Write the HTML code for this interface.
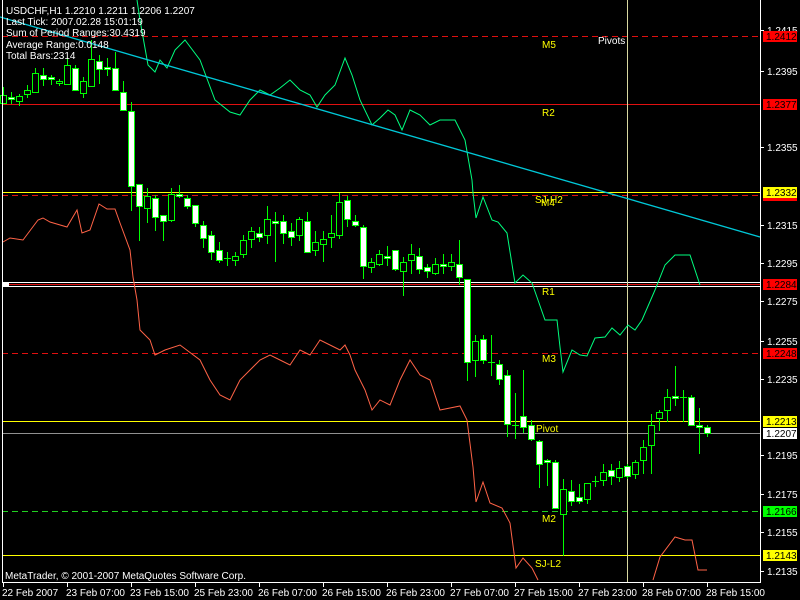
<!DOCTYPE html>
<html><head><meta charset="utf-8"><style>
html,body{margin:0;padding:0;background:#000;width:800px;height:600px;overflow:hidden}
svg{display:block}
text{font-family:"Liberation Sans",sans-serif;font-size:10px}
</style></head><body>
<svg id="s" width="800" height="600" xmlns="http://www.w3.org/2000/svg" shape-rendering="crispEdges">
<rect width="800" height="600" fill="#000"/>
<!-- horizontal levels -->
<line x1="2" y1="36.5" x2="760" y2="36.5" stroke="#e01010" stroke-dasharray="6,4"/>
<line x1="2" y1="104.5" x2="760" y2="104.5" stroke="#e01010"/>
<line x1="2" y1="192.5" x2="760" y2="192.5" stroke="#ffff00"/>
<line x1="2" y1="195.5" x2="760" y2="195.5" stroke="#e01010" stroke-dasharray="6,4"/>
<line x1="2" y1="282.5" x2="760" y2="282.5" stroke="#fff"/>
<line x1="2" y1="284.5" x2="760" y2="284.5" stroke="#e01010"/>
<line x1="2" y1="286.5" x2="760" y2="286.5" stroke="#fff"/>
<rect x="2" y="282" width="7" height="5" fill="#fff"/>
<line x1="2" y1="353.5" x2="760" y2="353.5" stroke="#e01010" stroke-dasharray="6,4"/>
<line x1="2" y1="421.5" x2="760" y2="421.5" stroke="#ffff00"/>
<line x1="2" y1="433.5" x2="760" y2="433.5" stroke="#909090"/>
<line x1="2" y1="511.5" x2="760" y2="511.5" stroke="#20d020" stroke-dasharray="6,4"/>
<line x1="2" y1="555.5" x2="760" y2="555.5" stroke="#ffff00"/>
<line x1="627.5" y1="0" x2="627.5" y2="582" stroke="#d8d8a0"/>
<g id="c"></g>
<polyline shape-rendering="auto" fill="none" stroke="#00ff7f" stroke-width="1" points="137,0 140,20 148,65 155,72 160,60 167,68 175,50 185,40 200,60 215,100 230,112 240,115 250,100 260,90 270,95 280,88 290,80 300,90 310,95 317,107 325,95 335,85 345,58 352,75 360,100 372,125 380,118 388,110 395,115 402,130 410,110 420,115 430,125 440,120 455,120 465,140 472,180 473,193 476,218 483,197 492,220 498,222 507,233 515,283 523,275 532,283 545,320 557,320 560,347 563,372 572,350 580,355 587,356 595,338 605,337 612,328 620,335 628,325 635,330 642,320 655,290 665,265 675,255 690,255 695,270 700,285"/>
<polyline shape-rendering="auto" fill="none" stroke="#ff6347" stroke-width="1" points="3,242 10,238 23,240 38,220 43,218 50,222 67,227 77,210 82,233 90,230 99,204 107,209 115,209 120,223 130,250 133,277 137,300 140,330 150,340 155,355 165,350 180,345 200,360 210,380 220,395 230,400 240,380 250,370 260,360 270,355 280,360 290,365 300,350 310,355 320,340 330,345 340,350 345,345 350,355 355,370 365,390 372,410 380,400 390,405 400,380 410,360 420,375 430,380 440,410 460,406 467,420 473,467 476,502 483,482 490,503 502,508 510,523 516,568 523,558 532,568 538,580"/>
<polyline shape-rendering="auto" fill="none" stroke="#ff6347" stroke-width="1" points="653,580 660,557 675,537 685,540 692,540 698,570 707,570"/>
<line shape-rendering="auto" x1="0" y1="17" x2="760" y2="237" stroke="#00c8d8" stroke-width="1.3"/>
<!-- level labels -->
<g fill="#ffff00">
<text x="542" y="48">M5</text>
<text x="542" y="116">R2</text>
<text x="535" y="203">SJ-H2</text>
<text x="541" y="206">M4</text>
<text x="542" y="295">R1</text>
<text x="542" y="362">M3</text>
<text x="536" y="432">Pivot</text>
<text x="542" y="522">M2</text>
<text x="535" y="567">SJ-L2</text>
</g>
<text x="598" y="44" fill="#fff">Pivots</text>
<!-- info text -->
<g fill="#fff">
<text x="6" y="14">USDCHF,H1  1.2210 1.2211 1.2206 1.2207</text>
<text x="6" y="25">Last Tick: 2007.02.28 15:01:19</text>
<text x="6" y="36">Sum of Period Ranges:30.4319</text>
<text x="6" y="48">Average Range:0.0148</text>
<text x="6" y="59">Total Bars:2314</text>
<text x="5" y="579">MetaTrader, © 2001-2007 MetaQuotes Software Corp.</text>
</g>
<!-- axes -->
<line x1="2.5" y1="0" x2="2.5" y2="583" stroke="#fff"/>
<line x1="760.5" y1="0" x2="760.5" y2="583" stroke="#fff"/>
<line x1="2" y1="582.5" x2="761" y2="582.5" stroke="#fff"/>
<g id="ax" fill="#fff"></g>
<g id="tags"></g>
</svg>
<script>
var NS="http://www.w3.org/2000/svg";
function el(p,t,a,tx){var e=document.createElementNS(NS,t);for(var k in a)e.setAttribute(k,a[k]);if(tx)e.textContent=tx;p.appendChild(e);return e;}
// [top,bottom,high,low,white(1)/hollow(0)/cross(2)]
var d=[[95,103,87,103,0],[97,99,92,103,1],[96,101,94,105,0],[90,94,85,97,0],[73,92,68,92,0],[75,79,68,85,1],[77,79,75,84,1],[81,83,79,85,0],[65,84,58,84,0],[68,90,65,90,1],[81,93,77,97,0],[59,86,40,86,0],[61,69,55,83,1],[67,69,58,75,1],[68,90,52,90,1],[92,110,81,110,1],[111,186,102,210,1],[184,206,184,240,1],[196,208,188,222,0],[198,217,195,230,1],[215,221,215,240,1],[194,220,188,221,0],[194,196,185,197,1],[198,206,195,208,1],
[205,223,205,226,1],[225,238,221,247,1],[235,252,231,259,1],[250,260,242,262,1],[258,258,252,265,2],[256,260,252,265,0],[240,254,235,257,0],[231,239,227,247,0],[233,237,227,241,1],[219,235,206,243,0],[221,223,212,261,1],[221,233,215,243,1],[231,237,223,245,1],[219,235,217,240,0],[221,252,212,252,1],[242,250,231,255,0],[239,244,231,261,0],[233,237,215,247,0],[202,235,193,238,0],[200,219,196,226,1],[221,225,215,226,1],[227,266,225,278,1],
[262,267,258,272,0],[254,264,250,265,0],[256,258,246,265,1],[250,269,250,270,1],[262,271,257,295,0],[254,260,244,273,0],[256,269,248,273,1],[267,271,264,277,1],[264,273,258,274,0],[264,266,254,273,1],[262,266,254,270,0],[264,277,240,284,1],[279,362,279,380,1],[341,360,335,376,0],[339,360,335,363,1],[362,362,335,375,2],
[364,379,360,384,1],[375,424,370,436,1],[425,425,393,438,2],[416,427,370,432,1],[425,439,420,440,1],[441,464,440,487,1],[460,462,459,485,1],[462,508,460,508,1],[489,514,479,555,0],[491,501,480,505,1],[497,501,484,503,1],[483,499,483,503,0],[481,481,476,486,2],[472,480,464,485,0],[470,476,464,484,1],[468,477,461,481,0],[466,476,464,478,1],[462,474,460,478,0],[447,460,440,473,0],[425,445,414,473,0],[412,418,410,430,0],[397,410,389,421,0],[396,397,366,405,1],[397,397,390,421,2],[397,425,395,425,1],[425,427,408,453,1],[427,433,425,436,1]];
var g=document.getElementById("c");
d.forEach(function(c,i){var x=3+8*i;
 el(g,"line",{x1:x+0.5,y1:c[2],x2:x+0.5,y2:c[3]+1,stroke:"#00ff00"});
 if(c[4]==2){el(g,"line",{x1:x-3,y1:c[0]+0.5,x2:x+4,y2:c[0]+0.5,stroke:"#00ff00"});}
 else{el(g,"rect",{x:x-2.5,y:c[0]+0.5,width:6,height:Math.max(2,c[1]-c[0]),fill:c[4]?"#fff":"#000",stroke:"#00ff00"});}
});
var ax=document.getElementById("ax");
[["1.2415",30],["1.2395",71],["1.2355",147],["1.2315",225],["1.2295",263],["1.2275",301],["1.2255",341],["1.2235",379],["1.2195",455],["1.2175",494],["1.2155",532],["1.2135",571]].forEach(function(p){
 el(ax,"line",{x1:760,y1:p[1]+0.5,x2:764,y2:p[1]+0.5,stroke:"#fff"});
 el(ax,"text",{x:767,y:p[1]+4},p[0]);});
var dl=["22 Feb 2007","23 Feb 07:00","23 Feb 15:00","25 Feb 23:00","26 Feb 07:00","26 Feb 15:00","26 Feb 23:00","27 Feb 07:00","27 Feb 15:00","27 Feb 23:00","28 Feb 07:00","28 Feb 15:00"];
dl.forEach(function(t,i){var x=3+64*i;el(ax,"line",{x1:x+0.5,y1:582,x2:x+0.5,y2:587,stroke:"#fff"});el(ax,"text",{x:x-1,y:596},t);});
var tg=document.getElementById("tags");
[["1.2412",36,"#ff0000"],["1.2377",104,"#ff0000"],["1.2332",192,"#ffff00"],["1.2284",284,"#ff0000"],["1.2248",353,"#ff0000"],["1.2213",421,"#ffff00"],["1.2207",433,"#ffffff"],["1.2166",511,"#00ff00"],["1.2143",555,"#ffff00"]].forEach(function(p){
 if(p[0]=="1.2332")el(tg,"rect",{x:763,y:p[1]-3,width:34,height:12,fill:"#ff0000"});
 el(tg,"rect",{x:763,y:p[1]-5,width:34,height:11,fill:p[2]});
 el(tg,"text",{x:766,y:p[1]+4,fill:"#000"},p[0]);});
</script>
</body></html>
